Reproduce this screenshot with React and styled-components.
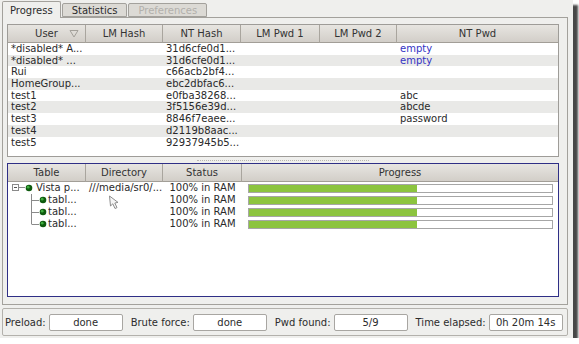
import React from 'react';
import styled, { createGlobalStyle } from 'styled-components';

const GlobalStyle = createGlobalStyle`
  body {
    margin: 0;
    background: #fff;
    font-family: "DejaVu Sans", "Liberation Sans", sans-serif;
    font-size: 10px;
    color: #2c2c2c;
  }
`;

const Window = styled.div`
  position: relative;
  width: 573px;
  height: 338px;
  box-sizing: border-box;
  padding: 1px 5px 0 2px;
  background: #efefed;
  box-shadow: 5px 5px 2px rgba(0, 0, 0, 0.72);
  display: flex;
  flex-direction: column;
`;

const TabBar = styled.div`
  display: flex;
  align-items: flex-end;
  height: 16px;
`;

const Tab = styled.div`
  position: relative;
  z-index: ${(p) => (p.$active ? 1 : 0)};
  height: ${(p) => (p.$active ? '17px' : '14px')};
  margin-bottom: ${(p) => (p.$active ? '-1px' : '0')};
  margin-right: 1px;
  padding: 0 ${(p) => (p.$active ? '7px' : '9px')};
  box-sizing: border-box;
  display: flex;
  align-items: center;
  background: ${(p) => (p.$active ? '#efefed' : '#dcdad5')};
  border: 1px solid #a3a19c;
  border-bottom: ${(p) => (p.$active ? 'none' : '1px solid #a3a19c')};
  border-radius: 2px 2px 0 0;
  color: ${(p) => (p.$disabled ? '#b2b0ac' : '#2c2c2c')};
`;

const Panel = styled.div`
  height: 288px;
  box-sizing: border-box;
  border: 1px solid #a3a19c;
  padding: 6px 8px 6px 4px;
  display: flex;
  flex-direction: column;
`;

const TableBox = styled.div`
  position: relative;
  height: ${(p) => p.$h}px;
  box-sizing: border-box;
  background: #fff;
  border: 1px solid ${(p) => (p.$focused ? '#2f2f86' : '#9e9c98')};
  overflow: hidden;
`;

const HeaderRow = styled.div`
  display: grid;
  grid-template-columns: ${(p) => p.$cols};
  height: 18px;
`;

const HeaderCell = styled.div`
  position: relative;
  display: flex;
  align-items: center;
  justify-content: center;
  background: linear-gradient(#e7e5e1, #d2cec8);
  border-right: 1px solid #a9a59e;
  border-bottom: 1px solid #a29e97;
  color: #333;
  &:last-child {
    border-right: none;
  }
`;

const SortArrow = styled.svg`
  position: absolute;
  right: 6px;
  top: 4px;
`;

const Row = styled.div`
  display: grid;
  grid-template-columns: ${(p) => p.$cols};
  height: ${(p) => p.$h}px;
  line-height: ${(p) => p.$h}px;
  background: ${(p) => (p.$striped ? '#e9e9e7' : '#fff')};
`;

const Cell = styled.div`
  padding-left: ${(p) => (p.$center ? 0 : 3)}px;
  text-align: ${(p) => (p.$center ? 'center' : 'left')};
  white-space: nowrap;
  overflow: hidden;
  color: ${(p) => (p.$blue ? '#3434c4' : '#2a2a2a')};
`;

const Splitter = styled.div`
  height: 6px;
  display: flex;
  align-items: center;
  justify-content: center;
  &::before {
    content: '';
    width: 172px;
    border-top: 1px dotted #b9b7b2;
  }
`;

const TreeCell = styled.div`
  display: flex;
  align-items: center;
  white-space: nowrap;
  overflow: hidden;
`;

const BarCell = styled.div`
  display: flex;
  align-items: center;
  padding: 0 5px 0 6px;
`;

const Bar = styled.div`
  flex: 1;
  height: 9px;
  box-sizing: border-box;
  border: 1px solid #a6a6a6;
  background: #fff;
  display: flex;
`;

const BarFill = styled.div`
  background: #8cc43f;
`;

const Cursor = styled.svg`
  position: absolute;
  left: 100px;
  top: 31px;
`;

const StatusBar = styled.div`
  margin-top: 3px;
  height: 28px;
  box-sizing: border-box;
  border: 1px solid #b3b1ac;
  border-radius: 2px;
  display: flex;
  align-items: center;
  padding: 0 4px 0 2px;
`;

const Label = styled.span`
  margin-right: 3px;
  color: #2c2c2c;
`;

const Field = styled.div`
  width: 74px;
  height: 17px;
  box-sizing: border-box;
  margin-right: 8px;
  background: #fff;
  border: 1px solid #a8a6a2;
  border-radius: 2px;
  display: flex;
  align-items: center;
  justify-content: center;
  &:last-child {
    margin-right: 0;
  }
`;

const hashCols = '78px 77px 78px 79px 77px 1fr';
const hashHeaders = ['User', 'LM Hash', 'NT Hash', 'LM Pwd 1', 'LM Pwd 2', 'NT Pwd'];
const users = [
  { user: '*disabled* A...', nt: '31d6cfe0d1...', pwd: 'empty', blue: true },
  { user: '*disabled* ...', nt: '31d6cfe0d1...', pwd: 'empty', blue: true },
  { user: 'Rui', nt: 'c66acb2bf4...' },
  { user: 'HomeGroup...', nt: 'ebc2dbfac6...' },
  { user: 'test1', nt: 'e0fba38268...', pwd: 'abc' },
  { user: 'test2', nt: '3f5156e39d...', pwd: 'abcde' },
  { user: 'test3', nt: '8846f7eaee...', pwd: 'password' },
  { user: 'test4', nt: 'd2119b8aac...' },
  { user: 'test5', nt: '92937945b5...' },
];

const tableCols = '78px 77px 79px 1fr';
const tables = [
  { name: 'Vista p...', dir: '///media/sr0/...', parent: true },
  { name: 'tabl...', dir: '' },
  { name: 'tabl...', dir: '' },
  { name: 'tabl...', dir: '', last: true },
];

function Dot({ cx }) {
  return (
    <>
      <circle cx={cx} cy="6" r="3.3" fill="#0e5a0e" />
      <circle cx={cx - 0.8} cy="5.2" r="1.4" fill="#3fae3f" />
    </>
  );
}

function TreeIcon({ parent, last }) {
  if (parent) {
    return (
      <svg width="30" height="12">
        <rect x="4.5" y="2.5" width="6" height="6" fill="#fff" stroke="#8a8a8a" />
        <line x1="6" y1="5.5" x2="9" y2="5.5" stroke="#555" />
        <line x1="11" y1="5.5" x2="17" y2="5.5" stroke="#8a8a8a" />
        <Dot cx={21} />
      </svg>
    );
  }
  return (
    <svg width="44" height="12">
      <line x1="23.5" y1="0" x2="23.5" y2={last ? 6 : 12} stroke="#8a8a8a" />
      <line x1="23.5" y1="6.5" x2="31" y2="6.5" stroke="#8a8a8a" />
      <Dot cx={35} />
    </svg>
  );
}

export default function App() {
  return (
    <>
      <GlobalStyle />
      <Window>
        <TabBar>
          <Tab $active>Progress</Tab>
          <Tab>Statistics</Tab>
          <Tab $disabled>Preferences</Tab>
        </TabBar>
        <Panel>
          <TableBox $h={133}>
            <HeaderRow $cols={hashCols}>
              {hashHeaders.map((h, i) => (
                <HeaderCell key={h}>
                  {h}
                  {i === 0 && (
                    <SortArrow width="10" height="9">
                      <path d="M1 1.5 L9 1.5 L5 8 Z" fill="none" stroke="#a3a09a" />
                    </SortArrow>
                  )}
                </HeaderCell>
              ))}
            </HeaderRow>
            {users.map((u, i) => (
              <Row key={i} $cols={hashCols} $h={11.7} $striped={i % 2 === 1}>
                <Cell>{u.user}</Cell>
                <Cell />
                <Cell>{u.nt}</Cell>
                <Cell />
                <Cell />
                <Cell $blue={u.blue}>{u.pwd}</Cell>
              </Row>
            ))}
          </TableBox>
          <Splitter />
          <TableBox $h={134} $focused>
            <HeaderRow $cols={tableCols}>
              <HeaderCell>Table</HeaderCell>
              <HeaderCell>Directory</HeaderCell>
              <HeaderCell>Status</HeaderCell>
              <HeaderCell>Progress</HeaderCell>
            </HeaderRow>
            {tables.map((t, i) => (
              <Row key={i} $cols={tableCols} $h={12}>
                <TreeCell>
                  <TreeIcon parent={t.parent} last={t.last} />
                  <span style={{ marginLeft: t.parent ? -2 : -4 }}>{t.name}</span>
                </TreeCell>
                <Cell>{t.dir}</Cell>
                <Cell $center>100% in RAM</Cell>
                <BarCell>
                  <Bar>
                    <BarFill style={{ width: `${(5 / 9) * 100}%` }} />
                  </Bar>
                </BarCell>
              </Row>
            ))}
            <Cursor width="12" height="15" viewBox="0 0 12 15">
              <path
                d="M1.5 1 L2.5 11 L4.8 8.8 L7 13.5 L9 12.6 L6.8 8 L10 7.4 Z"
                fill="#f6f6f6"
                stroke="#8e8e8e"
                strokeLinejoin="round"
              />
            </Cursor>
          </TableBox>
        </Panel>
        <StatusBar>
          <Label>Preload:</Label>
          <Field>done</Field>
          <Label>Brute force:</Label>
          <Field>done</Field>
          <Label>Pwd found:</Label>
          <Field>5/9</Field>
          <Label>Time elapsed:</Label>
          <Field>0h 20m 14s</Field>
        </StatusBar>
      </Window>
    </>
  );
}
